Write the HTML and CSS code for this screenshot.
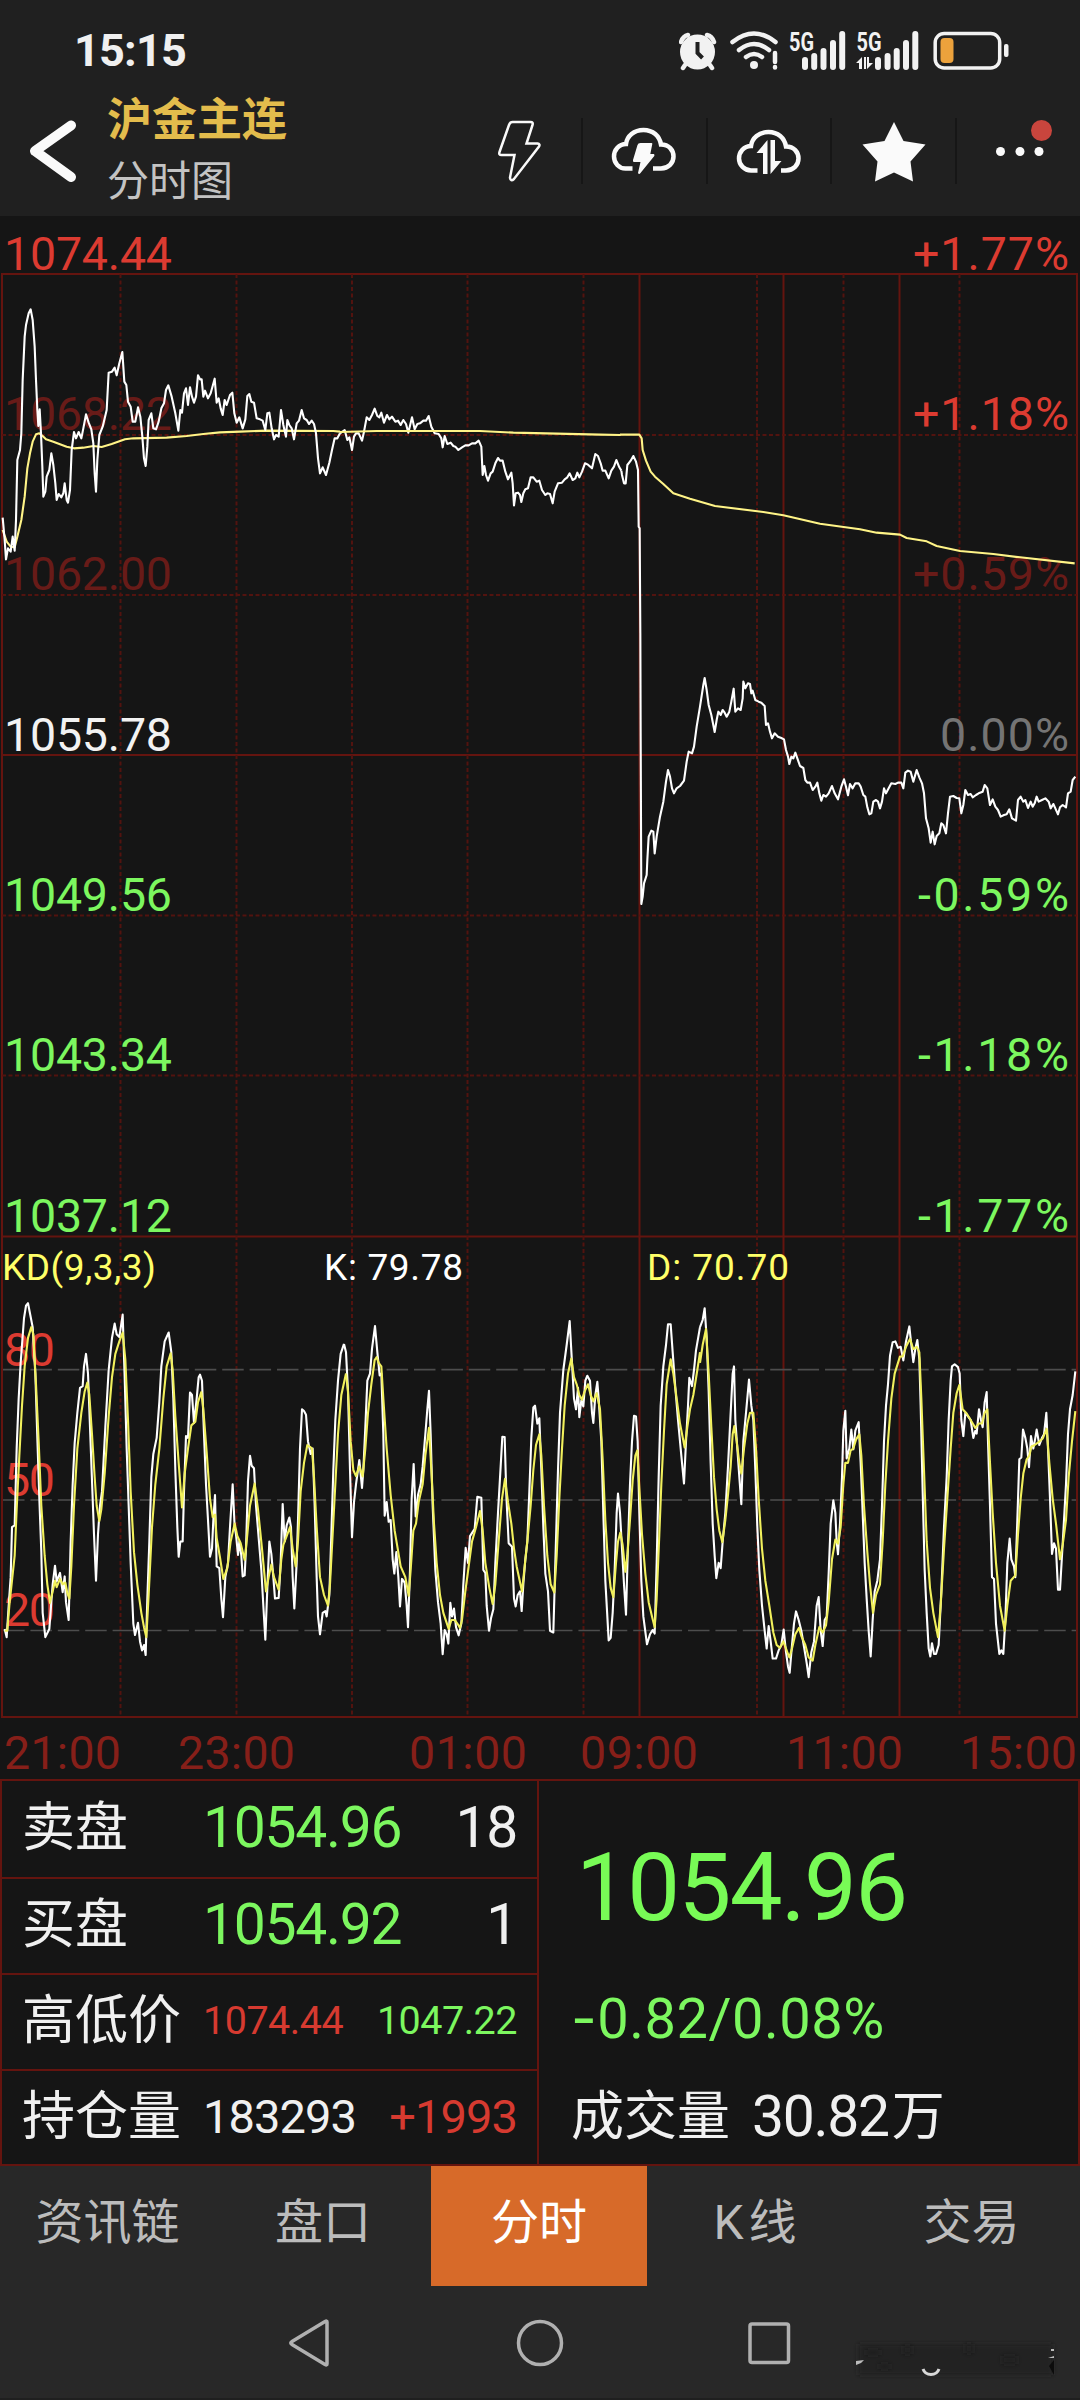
FILE: index.html
```
<!DOCTYPE html>
<html lang="zh-CN">
<head>
  <meta charset="UTF-8">
  <meta name="viewport" content="width=device-width, initial-scale=1.0">
  <title>沪金主连 分时图</title>
  <link rel="stylesheet" href="styles.css">
</head>
<body>

  <!-- 顶部 -->
  <header class="header">
    <div class="status">
      <span class="clock">15:15</span>
      <div class="status-icons">
        <svg class="alarm" width="38" height="40" viewBox="679 31 38 40">
          <ellipse cx="697.500" cy="52" rx="17.500" ry="17.500"/>
          <path class="line" d="M681 42q2-6 7-7M707 35q5 1 7 7M685 65l-2 3M710 65l2 3"/>
          <path class="cut" d="M697.500 42v11l5 5"/>
        </svg>
        <svg class="wifi" width="49" height="40" viewBox="730 31 49 40">
          <path class="line" d="M732.500 42q21.500-17 43 0M739 50q15-12 30 0M746 57q8-6 16 0"/>
          <circle cx="754" cy="65" r="4"/>
          <path class="line" d="M775 53v9M775 67v.5"/>
        </svg>
        <svg class="signal" width="58" height="40" viewBox="788 31 58 40">
          <text x="789" y="50.500" textLength="25" lengthAdjust="spacingAndGlyphs">5G</text>
          <path class="bars" d="M805 60v7M814.200 56v11M823.500 51v16M833 43v24M842.200 34v33"/>
        </svg>
        <svg class="signal" width="64" height="40" viewBox="855 31 64 40">
          <text x="856.500" y="50.500" textLength="25" lengthAdjust="spacingAndGlyphs">5G</text>
          <path class="bars" d="M878 60v7M887.600 56v11M896.700 51v16M906 43v24M915.300 34v33"/>
          <path d="M856 63l6-6v12h-3v-6zM864 57h2v12h-2zM867 57h2v6h4l-6 6z"/>
        </svg>
        <svg class="battery" width="76" height="40" viewBox="933 31 76 40">
          <rect class="shell" x="935.200" y="33.500" width="64.500" height="34.500" rx="9"/>
          <rect class="level" x="940.500" y="38" width="13" height="25" rx="4"/>
          <rect x="1004" y="44" width="4.500" height="13" rx="2"/>
        </svg>
      </div>
    </div>

    <div class="toolbar">
      <svg class="back" width="46" height="66" viewBox="30 118 46 66">
        <path d="M71 125.500L35 151l36 26"/>
      </svg>
      <div class="title">
        <h1>沪金主连</h1>
        <h2>分时图</h2>
      </div>
      <div class="tools">
        <div class="tool">
          <svg width="64" height="66" viewBox="487.500 118 64 66">
            <path class="outline" d="M513 122h18q3 0 2 3l-6 18.500h11q3 .5 1.500 3L514.500 179q-3.500 3-4-1.500L515 155h-13q-3 0-2-3l9.500-27q1-3 3.500-3z"/>
          </svg>
        </div>
        <div class="tool">
          <svg width="68" height="66" viewBox="610.500 118 68 66">
            <path class="cloud" d="M633 168.500h-7c-6.500 0-11.500-5.500-11.500-12s5-12.500 12-12.500c1-8 8-14 17.500-14s16 6 17.500 14.500c8 0 12.500 5.500 12.500 12s-5 12-12.500 12h-8"/>
            <path d="M641 143h11q1 0 .8 1l-2 10h3.500q1 .5.500 2L641 173q-1.500 2-2.500 0l2.500-11h-6.500q-1.500 0-1-2l4.500-15q.5-2 3-2z"/>
          </svg>
        </div>
        <div class="tool">
          <svg width="68" height="66" viewBox="735.500 118 68 66">
            <path class="cloud" d="M758 170.500h-6.500c-6.500 0-12-5.500-12-12s5-12.500 12-12.500c1-8 8-14 17.500-14s16 6 17.500 14.500c8 0 12.500 5.500 12.500 12s-5 12-12.500 12h-5"/>
            <path d="M757 153l11-13v34h-4.500v-21zM771 140h4.500v21h6.500l-11 13z"/>
          </svg>
        </div>
        <div class="tool">
          <svg width="68" height="66" viewBox="860.500 118 68 66">
            <path d="M894.500 122l9.500 19 22 3.500-15 17 2.500 20-19-9-19 9 2.500-20-15-17 22-3.500z"/>
          </svg>
        </div>
        <div class="tool">
          <svg width="68" height="66" viewBox="984.500 118 68 66">
            <circle cx="1000" cy="151.500" r="4.500"/>
            <circle cx="1019.500" cy="151.500" r="4.500"/>
            <circle cx="1038.500" cy="151.500" r="4.500"/>
            <circle class="dot" cx="1041" cy="130.500" r="10.500"/>
          </svg>
        </div>
      </div>
    </div>
  </header>

  <!-- 分时图 + KD -->
  <svg class="chart" width="1080" height="1565" viewBox="0 216 1080 1565">
    <g class="grid">
      <path d="M2 1717V274H1077V1717zM2 755H1077M2 1236.500H1077M639.500 274V1717M783.500 274V1717M899.500 274V1717"/>
      <path class="dash" d="M2 435H1077M2 595H1077M2 915.500H1077M2 1075.500H1077"/>
      <path class="dash" d="M120.500 274V1717M236.500 274V1717M352 274V1717M467.500 274V1717M583.500 274V1717M757 274V1717M843.500 274V1717M959.500 274V1717"/>
      <path class="level-line" d="M3 1369.600H1076M3 1500H1076M3 1630.500H1076"/>
      <path d="M0 1780H1080"/>
    </g>

    <g class="axis">
      <text class="up" x="4" y="270" textLength="168">1074.44</text>
      <text class="up faint" x="4" y="430" textLength="168">1068.22</text>
      <text class="up faint" x="4" y="590" textLength="168">1062.00</text>
      <text class="flat" x="4" y="751" textLength="168">1055.78</text>
      <text class="down" x="4" y="911" textLength="168">1049.56</text>
      <text class="down" x="4" y="1071" textLength="168">1043.34</text>
      <text class="down" x="4" y="1232" textLength="168">1037.12</text>
      <text class="up" x="913" y="270" textLength="156">+1.77%</text>
      <text class="up" x="913" y="430" textLength="156">+1.18%</text>
      <text class="up faint" x="913" y="590" textLength="156">+0.59%</text>
      <text class="flat gray" x="940" y="751" textLength="129">0.00%</text>
      <text class="down" x="918" y="911" textLength="151">-0.59%</text>
      <text class="down" x="918" y="1071" textLength="151">-1.18%</text>
      <text class="down" x="918" y="1232" textLength="151">-1.77%</text>
      <text class="up" x="4" y="1366" textLength="51">80</text>
      <text class="up" x="4" y="1496" textLength="51">50</text>
      <text class="up" x="4" y="1626" textLength="51">20</text>
    </g>

    <g class="kd-title">
      <text class="yellow" x="2" y="1280" textLength="154">KD(9,3,3)</text>
      <text class="white" x="324" y="1280" textLength="139">K: 79.78</text>
      <text class="yellow" x="647" y="1280" textLength="142">D: 70.70</text>
    </g>

    <g class="time">
      <text x="4" y="1769" textLength="117">21:00</text>
      <text x="178" y="1769" textLength="117">23:00</text>
      <text x="409" y="1769" textLength="118">01:00</text>
      <text x="580" y="1769" textLength="118">09:00</text>
      <text x="786" y="1769" textLength="117">11:00</text>
      <text x="960" y="1769" textLength="117">15:00</text>
    </g>

    <!-- 价格 / 均价 -->
    <g transform="translate(0 220) scale(.33333)">
      <polyline class="avg" points="8,930 20,965 32,980 44,982 52,950 64,900 74,830 82,745 90,700 98,665 108,643 118,640 128,648 138,658 160,665 200,680 222,685 250,683 280,678 305,681 335,672 375,658 400,655 500,653 560,648 610,642 660,637 720,635 800,632 1000,633 1020,635"/>
      <polyline class="price" points="8,893 14,960 18,1018 24,985 32,995 38,950 44,992 48,900 52,720 60,690 64,640 68,480 74,350 78,315 86,280 92,268 98,300 104,380 108,480 112,570 115,618 119,568 123,640 127,740 130,830 136,815 140,770 148,750 154,700 160,735 166,790 170,840 176,822 184,832 190,820 194,790 200,840 204,848 210,810 215,690 222,636 228,655 236,636 244,655 250,625 258,583 266,608 274,628 280,670 284,760 288,815 292,720 298,645 308,620 320,570 326,458 336,455 344,443 350,466 358,430 367,396 373,485 379,495 384,545 392,560 398,605 406,605 414,562 421,590 427,650 432,715 437,738 442,680 446,600 454,580 460,625 468,628 476,605 484,565 492,550 498,510 505,496 515,530 526,580 535,632 541,570 546,578 552,520 558,505 564,555 570,502 576,530 582,548 588,530 594,466 600,478 605,478 610,530 615,512 624,535 632,520 644,476 650,548 656,535 662,565 668,585 674,540 680,555 690,525 697,518 703,580 710,608 718,592 728,625 736,598 742,528 748,522 754,545 762,548 770,595 780,598 788,602 796,630 802,580 808,578 815,625 822,658 828,645 836,650 843,570 850,615 858,650 862,600 868,615 875,625 882,658 890,610 897,602 905,570 912,595 920,600 927,612 935,602 942,612 948,640 954,715 960,760 968,742 978,765 988,728 996,690 1004,655 1012,655 1020,640"/>
    </g>
    <g transform="translate(340 220) scale(.33333)">
      <polyline class="price" points="0,640 14,630 22,660 28,652 36,690 42,650 48,640 56,640 66,662 72,635 80,592 88,600 96,585 104,566 112,588 118,592 124,578 132,608 141,585 148,598 156,590 166,605 174,602 182,615 190,600 198,612 205,638 216,592 224,628 232,612 240,610 250,602 258,602 266,588 274,620 284,640 296,642 304,655 308,682 314,648 322,672 332,668 340,678 346,680 355,690 366,682 376,676 386,676 396,670 406,670 416,662 424,680 428,765 433,738 438,765 444,782 452,760 458,755 466,730 474,714 480,722 488,722 496,755 504,778 514,758 518,790 522,856 527,820 534,818 540,825 544,846 550,820 556,808 564,805 572,772 580,772 590,785 598,782 606,810 616,825 622,820 630,822 638,850 644,815 654,790 666,788 674,778 682,772 689,760 698,780 706,775 712,758 718,772 726,755 735,730 744,734 756,745 766,702 774,708 782,730 788,752 796,752 806,775 814,752 822,740 829,720 838,742 844,752"/>
      <polyline class="avg" points="0,636 110,633 420,633 520,638 780,644 842,645"/>
    </g>
    <g transform="translate(620 400) scale(.33333)">
      <polyline class="price" points="4,212 6,225 12,250 17,250 22,195 32,182 40,168 48,185 54,210 56,380 59,385 61,700 62,1010 64,1512 68,1490 72,1450 80,1425 82,1380 86,1310 94,1292 100,1295 104,1360 110,1310 120,1250 130,1205 138,1145 144,1110 150,1130 156,1165 162,1180 170,1165 180,1158 192,1142 200,1085 206,1055 216,1060 222,1040 230,980 240,920 250,855 254,834 260,870 266,915 274,945 284,996 290,960 295,935 302,945 308,930 314,938 320,950 328,935 334,905 341,866 346,935 354,925 362,930 368,895 370,845 376,865 384,850 390,852 394,880 398,872 406,900 416,905 424,908 434,918 438,975 444,970 450,995 456,1015 464,1000 474,1010 484,1014 492,1018 498,1050 504,1070 508,1092 514,1070 520,1075 526,1058 532,1075 540,1098 550,1104 556,1140 562,1148 570,1148 578,1170 586,1160 592,1148 598,1180 604,1202 610,1185 618,1190 626,1180 636,1158 644,1180 654,1198 664,1160 672,1138 678,1160 684,1186 690,1152 698,1165 706,1150 716,1150 722,1160 730,1185 736,1190 742,1222 748,1243 754,1240 760,1205 768,1200 774,1205 780,1225 786,1205 792,1165 798,1180 806,1165 814,1150 826,1152 834,1148 844,1148 850,1165 856,1118 864,1112 872,1115 880,1145 890,1110 898,1132 906,1150 912,1180 918,1255 926,1285 932,1328 938,1295 944,1333 950,1308 958,1300 964,1270 970,1275 978,1300 984,1240 990,1190 1000,1188 1010,1194 1018,1195 1024,1240 1030,1215 1036,1170 1044,1185 1052,1182 1058,1192 1068,1185 1076,1180 1088,1175 1094,1155 1102,1165 1110,1215 1118,1198 1126,1220 1134,1230 1142,1250 1152,1245 1160,1243 1168,1228 1176,1255 1188,1262 1194,1200 1202,1190 1210,1205 1216,1200 1224,1224 1232,1205 1238,1220 1244,1210 1250,1190 1256,1205 1266,1200 1276,1195 1286,1205 1292,1225 1300,1212 1306,1225 1314,1243 1320,1222 1328,1215 1338,1222 1344,1180 1352,1175 1358,1140 1366,1130"/>
      <polyline class="avg" points="0,104 58,104 65,115 68,150 78,182 92,215 105,230 130,252 160,280 210,296 285,318 430,336 490,346 600,371 720,388 770,398 840,404 860,414 920,424 950,438 1020,453 1120,462 1200,472 1364,490"/>
    </g>

    <!-- K / D -->
    <g transform="translate(0 1220) scale(.33333 .35714)">
      <polyline class="k" points="14,1145 20,1168 26,1080 32,1000 36,860 44,855 50,640 56,500 62,400 72,275 78,240 84,233 90,262 98,300 106,430 112,610 118,780 124,930 128,1100 136,1168 148,1145 158,1020 165,968 170,1012 180,988 188,1042 194,998 198,1070 206,1120 212,900 218,740 224,625 232,540 240,470 248,465 252,410 258,375 264,430 270,580 276,730 282,880 288,1010 294,880 300,800 306,760 316,580 326,420 336,330 344,290 350,320 358,328 368,265 374,440 380,640 386,800 392,960 400,1130 405,1162 414,1128 420,1180 426,1205 432,1190 437,1218 442,1060 448,900 454,720 460,655 470,610 478,510 484,410 494,340 506,315 514,370 520,500 526,700 532,860 536,943 541,900 548,900 552,760 558,605 564,610 570,483 576,490 582,568 590,500 596,440 600,433 606,450 612,600 618,740 624,840 630,943 636,920 640,840 645,770 650,970 658,975 664,1060 669,1112 676,1000 684,960 690,860 698,740 704,860 708,880 714,938 718,900 724,940 728,998 734,995 738,920 744,730 750,660 755,688 762,695 768,800 776,890 784,980 790,1080 796,1175 802,1030 808,900 814,935 820,1000 825,1060 836,1058 842,960 848,795 854,900 860,855 868,833 873,860 878,1000 883,1088 890,960 894,840 900,640 906,530 912,535 918,545 924,620 932,655 938,640 944,800 950,1000 954,1110 960,1160 968,1100 976,1095 980,1110 988,1050 994,880 1000,700 1006,560 1014,450 1022,375 1032,347"/>
      <polyline class="d" points="14,1150 22,1150 28,1080 36,1010 44,940 50,810 58,660 66,520 74,410 84,330 94,300 100,320 108,460 116,620 124,800 134,940 142,1020 150,1072 158,1040 165,1010 170,1028 180,1005 188,1020 196,1015 202,1045 208,1060 214,970 222,800 232,640 244,540 254,480 262,455 268,490 276,600 284,720 290,800 298,843 304,810 314,710 326,550 336,440 346,375 358,340 368,315 376,390 384,560 392,760 402,930 412,1020 424,1100 432,1140 439,1168 446,1050 456,860 466,740 478,640 490,500 500,410 512,373 518,420 526,550 536,680 546,805 554,710 564,640 574,575 586,565 594,510 604,482 610,530 620,650 630,780 638,832 645,825 650,890 660,945 670,1005 682,975 692,900 704,850 712,885 722,905 734,952 740,900 750,800 764,738 774,810 786,920 798,1040 806,1000 814,965 822,1000 836,1035 844,950 850,910 858,890 870,860 878,920 887,970 894,900 902,760 912,680 922,630 930,635 936,640 942,720 950,860 960,1000 972,1050 984,1080 990,1020 998,880 1006,740 1014,600 1024,490 1038,430"/>
    </g>
    <g transform="translate(340 1220) scale(.33333 .35714)">
      <polyline class="k" points="12,347 18,370 24,480 30,700 36,888 42,790 48,740 58,672 66,750 70,700 76,580 82,450 90,430 96,360 105,297 112,370 119,435 124,430 130,600 134,828 140,790 146,845 152,840 158,950 163,990 169,930 175,1000 180,1082 186,1005 194,1015 200,1080 204,1140 210,980 215,780 221,683 227,830 234,770 242,740 248,690 256,600 262,530 267,478 272,600 278,800 286,980 294,1070 302,1130 308,1216 314,1148 320,1160 325,1186 331,1072 336,1110 342,1088 348,1140 356,1163 364,1130 370,1020 377,918 384,960 390,885 404,865 412,775 424,778 430,980 436,988 440,1080 447,1150 453,1115 460,1090 466,960 474,820 482,690 487,607 494,608 499,770 506,905 516,915 522,1060 527,1082 533,1050 540,1040 545,1095 550,1020 556,950 562,900 568,760 574,610 580,525 585,520 592,570 598,555 604,700 610,860 616,990 624,1040 630,1150 640,1155 646,960 654,700 660,540 670,420 680,350 689,283 696,400 702,500 708,530 714,470 718,552 724,505 730,522 736,450 742,436 750,450 756,540 760,568 766,490 772,453 776,500 784,620 790,820 796,1010 802,1110 806,1177 812,1170 818,1100 824,980 830,820 834,766 840,820 846,920 852,1020 858,1105 863,940 870,740 876,620 882,548 888,550 893,620 898,820 904,1010 910,1110 921,1188 930,1160 938,1148 944,1158 950,960 956,720 962,520 970,410 978,350 984,292 992,292 998,370 1006,470 1014,560 1024,660 1032,738 1038,620 1044,520 1048,442 1056,465 1062,420 1068,365 1080,300"/>
      <polyline class="d" points="18,430 24,480 32,620 40,700 48,717 58,690 68,718 76,640 84,540 94,460 104,392 110,384 116,400 124,410 130,500 140,640 152,770 164,870 174,925 182,970 196,1000 206,1052 212,980 220,870 228,850 236,790 248,740 256,660 267,582 274,700 282,850 290,960 300,1050 310,1100 326,1145 334,1120 344,1120 352,1130 360,1142 366,1120 376,1040 386,970 396,900 408,860 420,815 428,870 436,960 448,1030 458,1075 466,1020 476,900 486,780 495,725 504,790 514,850 522,920 530,970 546,1040 554,970 562,900 572,800 580,700 588,630 598,600 604,660 612,800 622,940 632,1020 643,1043 650,940 658,780 666,640 674,520 684,430 694,388 702,440 710,460 718,490 726,503 734,480 744,460 752,490 760,508 770,485 780,530 788,670 796,840 804,960 812,1030 820,1056 828,960 834,900 841,875 848,910 856,985 862,940 870,840 878,730 886,660 892,645 898,750 906,880 916,990 926,1070 936,1110 944,1140 950,1060 958,880 964,740 972,590 980,460 992,390 1000,430 1010,500 1020,570 1034,637 1042,580 1050,530 1060,490 1072,420 1080,370"/>
    </g>
    <g transform="translate(700 1220) scale(.33333 .35714)">
      <polyline class="k" points="0,300 8,280 14,247 20,330 26,480 32,680 38,850 44,940 49,1003 56,960 62,975 68,900 76,820 84,690 92,540 98,430 102,410 106,560 112,640 118,720 124,796 130,620 138,540 147,447 154,520 160,560 166,700 172,860 178,980 186,1080 194,1150 200,1200 206,1137 212,1180 218,1228 228,1228 236,1205 244,1190 251,1147 258,1210 264,1250 269,1268 276,1190 282,1130 288,1096 296,1120 304,1150 312,1195 320,1240 326,1280 334,1210 342,1180 350,1080 356,1056 362,1150 368,1193 374,1120 380,1110 386,990 392,850 400,785 406,820 410,900 414,936 420,850 426,720 430,590 436,534 440,668 448,640 454,587 460,642 466,590 476,566 482,680 488,820 494,960 500,1060 506,1150 512,1222 518,1120 524,1040 532,1010 540,950 546,800 552,620 558,520 564,460 570,380 578,342 586,340 594,358 602,355 610,393 618,340 628,298 634,350 640,398 646,360 652,336 658,390 662,520 668,760 674,980 680,1100 686,1200 691,1222 696,1185 702,1215 708,1215 716,1190 724,1040 732,860 740,720 746,560 752,450 756,410 764,404 774,412 779,430 784,560 790,605 796,540 804,550 812,560 820,610 826,590 830,598 837,530 843,560 848,580 854,510 860,482 864,620 870,800 876,1000 882,1005 888,1130 898,1215 904,1205 910,1215 916,1120 922,960 929,892 934,950 942,970 946,1000 952,840 958,670 964,665 969,587 976,610 982,640 987,692 993,605 1000,640 1006,610 1010,587 1018,630 1026,610 1032,600 1039,540 1044,640 1050,780 1056,935 1062,905 1068,920 1074,1035 1080,1035 1086,940 1092,840 1098,740 1104,600 1110,530 1118,490 1126,424"/>
      <polyline class="d" points="0,400 8,350 18,305 26,430 34,580 42,720 50,810 58,870 67,902 76,840 84,770 92,690 98,600 103,577 110,620 118,680 124,710 132,640 142,570 150,540 160,540 168,640 176,780 186,920 196,1010 208,1080 220,1155 230,1190 240,1198 250,1180 258,1200 268,1225 276,1200 286,1160 297,1142 304,1165 316,1190 326,1225 338,1234 346,1190 358,1140 368,1155 378,1135 386,1070 396,950 406,895 414,906 422,860 430,740 436,680 444,680 452,645 460,640 468,615 478,600 484,660 492,800 502,930 510,1020 519,1100 528,1050 540,1020 548,900 556,740 564,620 574,500 584,430 600,382 608,382 618,355 630,333 640,362 650,355 658,370 664,500 672,700 680,900 690,1030 700,1100 714,1168 722,1080 732,920 742,780 752,640 760,540 770,485 778,462 788,530 800,542 812,560 826,582 836,570 846,570 854,540 862,530 870,680 878,820 888,960 900,1080 914,1150 922,1080 932,1010 946,995 954,880 962,780 970,710 980,670 988,660 994,635 1004,630 1016,622 1028,612 1040,585 1048,680 1058,780 1068,850 1080,950 1088,910 1098,840 1106,720 1116,620 1126,535"/>
    </g>
  </svg>

  <!-- 盘口信息 -->
  <section class="quote">
    <div class="book">
      <div class="row">
        <span class="label">卖盘</span><b class="num down">1054.96</b><b class="num end">18</b>
      </div>
      <div class="row">
        <span class="label">买盘</span><b class="num down">1054.92</b><b class="num end">1</b>
      </div>
      <div class="row">
        <span class="label">高低价</span><b class="num small up">1074.44</b><b class="num small end down">1047.22</b>
      </div>
      <div class="row">
        <span class="label">持仓量</span><b class="num mid">183293</b><b class="num mid end up">+1993</b>
      </div>
    </div>
    <div class="last">
      <div class="last-price">1054.96</div>
      <div class="change"><span class="minus">-</span>0.82/0.08%</div>
      <div class="volume"><span class="label">成交量</span><b class="num">30.82</b><span class="label">万</span></div>
    </div>
  </section>

  <!-- 底部菜单 -->
  <nav class="tabs">
    <a class="tab">资讯链</a>
    <a class="tab">盘口</a>
    <a class="tab active">分时</a>
    <a class="tab k-tab">K<span>线</span></a>
    <a class="tab">交易</a>
  </nav>

  <footer class="sysbar">
    <svg width="48" height="54" viewBox="285 2316 48 54"><path d="M327 2322v42q0 1.500-2 .5l-33-20q-2.500-1.500 0-3l33-20q2-1 2 .5z"/></svg>
    <svg width="54" height="54" viewBox="513 2316 54 54"><circle cx="540" cy="2343" r="21.500"/></svg>
    <svg width="54" height="54" viewBox="742 2316 54 54"><rect x="750" y="2324" width="38.500" height="38.500" rx="2"/></svg>
    <svg class="smudge" width="210" height="48" viewBox="850 2336 210 48">
      <defs>
        <filter id="soft"><feGaussianBlur stdDeviation="2.500"/></filter>
      </defs>
      <rect class="patch" x="858" y="2344" width="195" height="31" filter="url(#soft)"/>
      <path class="patch" d="M866 2350h14v5h-14zM879 2364h11v5h-11zM903 2346h9v8h-9zM965 2344h8v9h-8zM1002 2356h15v8h-15z" filter="url(#soft)"/>
      <path class="shadow" d="M1049 2366l5-6v15z"/>
      <path class="glint" d="M923 2369q2 5.500 8 5.500t8-5.500"/>
      <path class="glint-fill" d="M856 2361l8-1-3 3-5 2zM1051 2349h3v2h-3zM1048 2358l6-2v2z"/>
    </svg>
  </footer>

</body>
</html>
```
FILE: styles.css
```
* {
  margin: 0;
  padding: 0;
  box-sizing: border-box;
}

body {
  width: 1080px;
  height: 2400px;
  overflow: hidden;
  background-color: #151515;
  color: #f0f0f0;
  font-family: Roboto, "Noto Sans CJK SC", sans-serif;
}

svg {
  display: block;
  flex-shrink: 0;
}

/* 顶部 */
.header {
  height: 216px;
  background-color: #202020;
}

.status {
  display: flex;
  justify-content: space-between;
  align-items: center;
  height: 86px;
  padding: 16px 71px 0 74px;
}

.clock {
  font-size: 45px;
  font-weight: 700;
  line-height: 70px;
  letter-spacing: -.8px;
}

.status-icons {
  display: flex;
  fill: #f2f2f2;
}

.alarm {
  margin-right: 13px;
}

.wifi {
  margin-right: 9px;
}

.signal {
  margin-right: 9px;
  overflow: visible;
}

.signal + .battery {
  margin-left: 5px;
}

.status-icons .line {
  fill: none;
  stroke: #f2f2f2;
  stroke-width: 4.5;
  stroke-linecap: round;
}

.status-icons .cut {
  fill: none;
  stroke: #202020;
  stroke-width: 4;
}

.bars {
  fill: none;
  stroke: #f2f2f2;
  stroke-width: 6;
  stroke-linecap: round;
}

.signal text {
  font-size: 26px;
  font-weight: 700;
}

.shell {
  fill: none;
  stroke: #f2f2f2;
  stroke-width: 3.5;
}

.level {
  fill: #eca23c;
}

.toolbar {
  display: flex;
  align-items: center;
  height: 130px;
}

.back {
  margin-left: 30px;
}

.back path {
  fill: none;
  stroke: #fafafa;
  stroke-width: 10;
  stroke-linecap: round;
  stroke-linejoin: round;
}

.title {
  width: 351px;
  margin: 0 0 0 31px;
}

.title h1 {
  color: #e3bc4c;
  font-size: 45px;
  font-weight: 700;
  line-height: 61px;
}

.title h2 {
  color: #c3c3c3;
  font-size: 42px;
  font-weight: 400;
  line-height: 61px;
}

.tools {
  display: flex;
  flex: 1;
}

.tool {
  display: flex;
  flex: 1;
  justify-content: center;
  fill: #fafafa;
}

.tool + .tool {
  border-left: 2px solid #161616;
}

.tool .outline {
  fill: none;
  stroke: #fafafa;
  stroke-width: 2.5;
}

.tool .cloud {
  fill: none;
  stroke: #fafafa;
  stroke-width: 4.5;
}

.tool .dot {
  fill: #c9453d;
}

/* 图表 */
.grid path {
  fill: none;
  stroke: #64140f;
  stroke-width: 2;
}

.grid .dash {
  stroke: #52130f;
  stroke-dasharray: 4 2.5;
}

.grid .level-line {
  stroke: #4d4d4d;
  stroke-width: 1.6;
  stroke-dasharray: 21.5 5.9;
}

.axis text,
.time text {
  font-size: 46.5px;
}

.up {
  color: #d63a30;
  fill: #dc3b31;
}

.down {
  color: #7cf75f;
  fill: #7cf75f;
}

.flat {
  fill: #f2f2f2;
}

.gray {
  fill: #747474;
}

.faint {
  fill: #681b18;
}

.time text {
  fill: #861f19;
}

.kd-title text {
  font-size: 37px;
}

.yellow {
  fill: #ffff68;
}

.white {
  fill: #fff;
}

.chart polyline {
  fill: none;
  stroke-width: 2.1;
  stroke-linejoin: round;
  vector-effect: non-scaling-stroke;
}

.price,
.k {
  stroke: #fff;
}

.avg {
  stroke: #fff487;
}

.d {
  stroke: #f1f05c;
}

/* 盘口信息 */
.quote {
  display: flex;
  height: 385px;
  border: solid #64140f;
  border-width: 0 2px 2px;
}

.book {
  width: 537px;
  border-right: 2px solid #64140f;
}

.row {
  display: grid;
  grid-template-columns: 181px 1fr auto;
  align-items: center;
  height: 96px;
  padding: 0 20px 2px 20px;
}

.row + .row {
  border-top: 2px solid #64140f;
}

.label {
  font-size: 53px;
  line-height: 80px;
}

.num {
  font-size: 57px;
  font-weight: 400;
  line-height: 80px;
  letter-spacing: -1.3px;
}

.small {
  font-size: 39.5px;
  letter-spacing: -.5px;
}

.mid {
  font-size: 47px;
  letter-spacing: -.9px;
}

.row .end {
  text-align: right;
}

.last {
  flex: 1;
  padding: 52px 0 0 32px;
}

.last-price {
  padding-left: 5px;
  color: #78fb56;
  font-size: 94px;
  line-height: 110px;
  letter-spacing: -1.6px;
}

.change {
  margin-top: 35px;
  color: #7cf75f;
  font-size: 56px;
  line-height: 80px;
  letter-spacing: .5px;
}

.minus {
  font-family: Inter, sans-serif;
}

.volume {
  display: flex;
  margin-top: 18px;
}

.volume .num {
  margin: 0 3px 0 22px;
}

/* 底部菜单 */
.tabs {
  display: grid;
  grid-template-columns: 215px 216px 216px 216px 1fr;
  height: 120px;
  background-color: #282828;
}

.tab {
  color: #bcbcbc;
  font-size: 48px;
  line-height: 113px;
  text-align: center;
}

.k-tab span {
  margin-left: 5px;
}

.active {
  background-color: #d76a29;
  color: #fff;
}

.sysbar {
  display: grid;
  grid-template-columns: 285px 228px 229px 108px 1fr;
  height: 114px;
  padding-top: 30px;
  background-color: #282828;
  border-bottom: 2px solid #1f1f1f;
}

.sysbar svg:first-child {
  grid-column: 2;
}

.sysbar path,
.sysbar circle,
.sysbar rect {
  fill: none;
  stroke: #b0b0b0;
  stroke-width: 3.5;
}

.sysbar .smudge {
  margin-top: 20px;
}

.sysbar .patch {
  fill: #1c1c1c;
  fill-opacity: .6;
  stroke: none;
}

.sysbar .shadow {
  fill: #0c0c0c;
  stroke: none;
}

.sysbar .glint {
  stroke: #d8d8d8;
  stroke-width: 3;
}

.sysbar .glint-fill {
  fill: #bbb;
  stroke: none;
}
```
